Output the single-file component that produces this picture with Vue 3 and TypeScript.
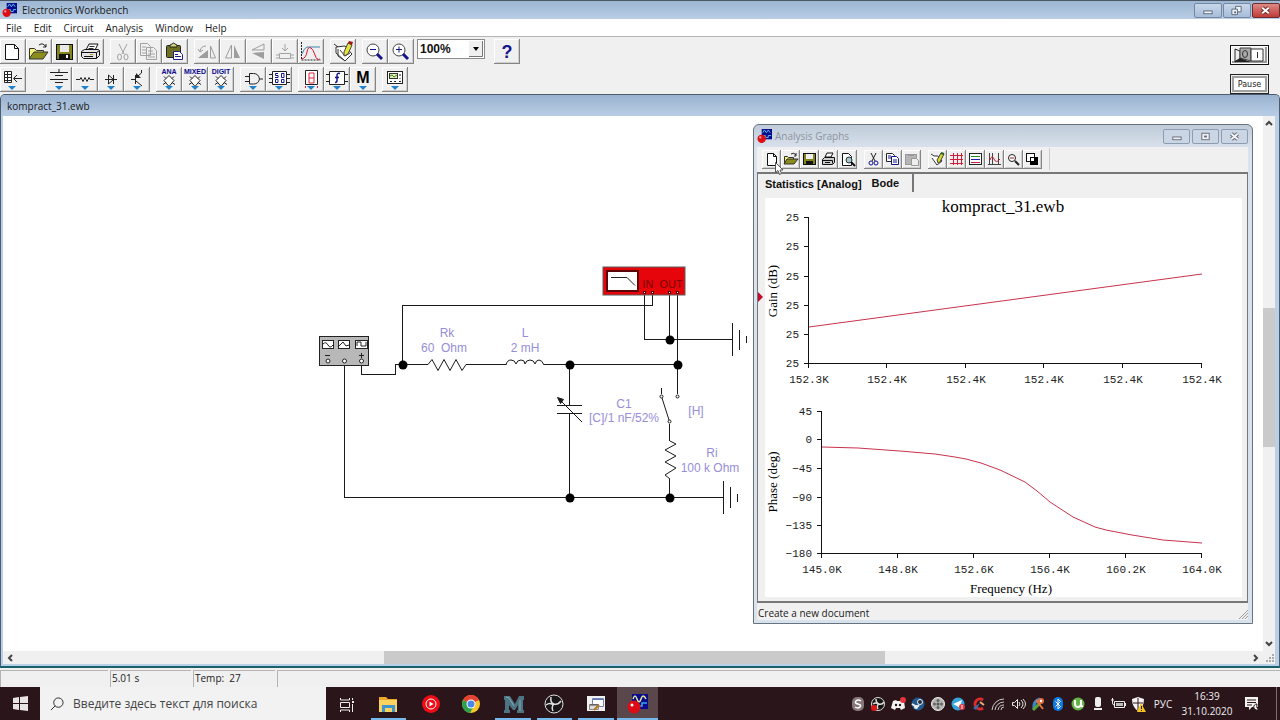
<script setup lang="ts">
import { ref } from 'vue'

interface Tool {
  name: string
  art: string
  off?: boolean
}

const logo =
  '<rect x="5" y="0" width="11" height="11" fill="#0a0a8c"/><path d="M6 4l2-3 2 3 2-3 2 3M6 9V7h3v2h3V7h3" stroke="#58c8ee" fill="none"/><circle cx="5" cy="10.5" r="4.5" fill="#dc0d14"/><circle cx="3.5" cy="9" r="1.2" fill="#ff9c9c"/>'

const drop = '<path d="M9 19h8l-4 4z" fill="#1f82cf"/>'
const chip = '<path d="M13 8.5l5 5-5 6-5-6z" fill="#fff" stroke="#222"/><path d="M8 9.5l2 2M18 9.5l-2 2M7 17.5l3-2M19 17.5l-3-2" stroke="#222"/>'
const tag = (t: string) =>
  `<text x="13" y="7" text-anchor="middle" font-family="Liberation Sans, sans-serif" font-size="7" font-weight="bold" fill="#0c0c8c">${t}</text>`
const ink = 'stroke="#222" fill="none"'
const dim = 'stroke="#a2a2a2" fill="none"'

const fileTools: Tool[] = [
  { name: 'New', art: '<path d="M5.5 5.5h9l4 4v11h-13z" fill="#fff" stroke="#111"/><path d="M14.5 5.5v4h4" stroke="#111" fill="none"/>' },
  { name: 'Open', art: '<path d="M3.5 19.5v-10h5l2 2h7v3" fill="#f4f27c" stroke="#333"/><path d="M3 20l5-7h14l-5 7z" fill="#8a8c1c" stroke="#333"/><path d="M13 6q4-3 7 2m0-3v3h-3" stroke="#222" fill="none"/>' },
  { name: 'Save', art: '<rect x="4.5" y="5.5" width="16" height="15" fill="#83851c" stroke="#111"/><rect x="8" y="6" width="9" height="7" fill="#e9e9e9"/><rect x="7" y="15" width="11" height="5" fill="#111"/><rect x="14" y="16" width="2" height="3" fill="#fff"/>' },
  { name: 'Print', art: '<path d="M8 11l3-6h9l-3 6z" fill="#fff" stroke="#111"/><path d="M11.5 7.5h5M10.5 9.5h5" stroke="#333"/><path d="M3.5 12.5l3-2h14l1 1v5l-3 3h-13l-2-2z" fill="#e4e4e4" stroke="#111"/><path d="M3.5 13.5h15v6M18.5 13.5l3-2" stroke="#111" fill="none"/><path d="M6 17.5h9" stroke="#111"/><path d="M12 15.5h3" stroke="#b0a010"/>' },
]
const editTools: Tool[] = [
  { name: 'Cut', off: true, art: `<path d="M9 5l5 10M17 5l-5 10" ${dim}/><ellipse cx="9.5" cy="18" rx="2" ry="3" ${dim}/><ellipse cx="16" cy="18" rx="2" ry="3" ${dim}/>` },
  { name: 'Copy', off: true, art: `<path d="M4.5 4.5h7l3 3v9h-10z" ${dim}/><path d="M10.5 8.5h7l3 3v9h-10zM6 8h4M6 11h4M6 14h4M12 12h5M12 15h7M12 18h7" ${dim}/>` },
  { name: 'Paste', art: '<rect x="4.5" y="6.5" width="14" height="12" rx="1" fill="#6f7020" stroke="#222"/><path d="M8 8V6l2-1q2-2 3 0l2 1v2z" fill="#d8d87c" stroke="#222"/><path d="M11.5 12.5h6l3 3v5h-9z" fill="#fff" stroke="#20208c"/><path d="M13 15.5h3M13 17.5h6" stroke="#20208c"/>' },
]
const shapeTools: Tool[] = [
  { name: 'Rotate', off: true, art: '<path d="M4 19h10v-8z" fill="#9d9d9d"/><path d="M16.5 7v12h5z" fill="none" stroke="#9d9d9d"/><path d="M6 12q1-5 6-5M4 10l2 3 3-2" stroke="#9d9d9d" fill="none"/>' },
  { name: 'Flip horizontal', off: true, art: '<path d="M11.5 6v13h-6z" fill="none" stroke="#9d9d9d"/><path d="M14 6v13h6z" fill="#9d9d9d"/>' },
  { name: 'Flip vertical', off: true, art: '<path d="M18 5v6H6z" fill="none" stroke="#9d9d9d"/><path d="M18 13v7L6 14z" fill="#9d9d9d"/>' },
  { name: 'Subcircuit', off: true, art: `<path d="M13 5v7m-3-3l3 3 3-3M7.5 14.5h11v5h-11zM4 16h3M19 16h3M4 19h3M19 19h3" ${dim}/>` },
  { name: 'Graphs', art: '<path d="M3.5 3v18h19" stroke="#222" stroke-dasharray="2 1" fill="none"/><path d="M4 15q2-6 5-7h13" stroke="#3a86a8" fill="none"/><path d="M4 20q4-1 5-7t4-4q2 1 4 7t5 4" stroke="#dc1428" fill="none"/>' },
]
const descTools: Tool[] = [
  { name: 'Description', art: '<path d="M4 5l4 3M6 8l9-1 7 8-7 7-9-8z" fill="#fff" stroke="#333"/><path d="M8 10v7l6 4M10 11l5 6 5-3" stroke="#333" fill="none"/><path d="M14 13l4-9 4 2-4 9-4 2z" fill="#e8e43c" stroke="#444"/><path d="M18 4l1-2 4 1-1 3z" fill="#a01414"/>' },
]
const zoomTools: Tool[] = [
  { name: 'Zoom out', art: '<circle cx="11" cy="11" r="6" fill="#fff" stroke="#444"/><path d="M8 10.5h6" stroke="#14148c"/><path d="M15 15l5 5" stroke="#14148c" stroke-width="3"/>' },
  { name: 'Zoom in', art: '<circle cx="11" cy="11" r="6" fill="#fff" stroke="#444"/><path d="M8 10.5h6M11 7.5v6" stroke="#14148c"/><path d="M15 15l5 5" stroke="#14148c" stroke-width="3"/>' },
]
const partGroups: Tool[][] = [
  [
    { name: 'Sources', art: drop + '<path d="M4 5.5h18M9 8.5h8M4 12.5h18M9 15.5h8M13 2v3" stroke="#222"/>' },
    { name: 'Basic', art: drop + `<path d="M4 12.5h4l1-2 2 4 2-4 2 4 2-4 1 2h4" ${ink}/>` },
    { name: 'Diodes', art: drop + `<path d="M7 12.5h12M10.5 8v9l5-4.5zM15.5 8v9" ${ink}/>` },
    { name: 'Transistors', art: drop + '<path d="M7 12.5h4M11.5 8v9M11.5 11l6-5v-3M12 14l6 5" stroke="#222" fill="none"/><path d="M12 6v5h5z" fill="#222"/>' },
  ],
  [
    { name: 'Analog ICs', art: tag('ANA') + chip + drop },
    { name: 'Mixed ICs', art: tag('MIXED') + chip + drop },
    { name: 'Digital ICs', art: tag('DIGIT') + chip + drop },
  ],
  [
    { name: 'Logic gates', art: drop + `<path d="M9.5 6.5h4q5 0 6 5.5-1 5-6 5h-4zM5 9.5h4M5 14.5h4M20 12h3" ${ink}/>` },
    { name: 'Digital', art: drop + '<path d="M6.5 4.5h14v13h-14zM3 7.5h3M3 11.5h3M3 15.5h3M21 7.5h3M21 11.5h3M21 15.5h3" stroke="#222" fill="#fff"/><path d="M12 6.5H9.5v2H12v2H9M15.5 6.5H18v4h-2.5zM9.5 12.5H12v3H9.5zM15.5 12.5H18v3h-2.5z" stroke="#14148c" fill="none"/>' },
  ],
  [
    { name: 'Indicators', art: '<path d="M7.5 3.5h12v14h-12z" stroke="#222" fill="#fff"/><path d="M11 6h5v5h-5zM11 11v5h5v-5M7.5 19v2M19.5 19v2" stroke="#e0233a" fill="none"/>' + drop },
    { name: 'Controls', art: drop + '<path d="M5.5 4.5h15v13h-15zM2 7.5h3M2 14.5h3M21 7.5h3M21 14.5h3" stroke="#222" fill="#fff"/><path d="M16 6.5q-3-1-3 2v5q0 2-2 2M11 10.5h4" stroke="#14148c" stroke-width="1.5" fill="none"/>' },
    { name: 'Miscellaneous', art: '<text x="13" y="16" text-anchor="middle" font-family="Liberation Sans, sans-serif" font-size="16" font-weight="bold">M</text>' + drop },
  ],
  [
    { name: 'Instruments', art: drop + '<rect x="5.5" y="4.5" width="15" height="12" fill="#fff" stroke="#222"/><rect x="7.5" y="6.5" width="8" height="5" fill="#dff0b8" stroke="#333"/><path d="M8 9l2-1 2 2 3-2" stroke="#4a8a22" fill="none"/><path d="M18 7v2M18 11v1M8 14.5h2M12 14.5h2M17 14.5h2" stroke="#222"/>' },
  ],
]

const graphTools: Tool[][] = [
  [
    { name: 'New document', art: '<path d="M5.5 3.5h6l3 3v9h-9z" fill="#fff" stroke="#111"/><path d="M11.5 3.5v3h3" stroke="#111" fill="none"/>' },
    { name: 'Open document', art: '<path d="M3.5 13.5v-7h3l1 1h5v2" fill="#f0ee6c" stroke="#333"/><path d="M3 14l3-5h11l-4 5z" fill="#8a8c1c" stroke="#333"/><path d="M10 4q3-2 5 1m0-2v3h-2" stroke="#222" fill="none"/>' },
    { name: 'Save document', art: '<rect x="3.5" y="3.5" width="12" height="11" fill="#83851c" stroke="#111"/><rect x="6" y="4" width="7" height="5" fill="#eee"/><rect x="6" y="11" width="7" height="3" fill="#111"/>' },
    { name: 'Print graph', art: '<path d="M6 7l2-4h6l-2 4z" fill="#fff" stroke="#111"/><path d="M3.5 9.5l2-2h10v5l-2 2h-10z" fill="#ccc" stroke="#111"/><path d="M3.5 10.5h10v3M6 12.5h5" stroke="#111" fill="none"/>' },
    { name: 'Print preview', art: '<path d="M4.5 3.5h6l3 3v9h-9z" fill="#fff" stroke="#111"/><circle cx="11" cy="10" r="3" fill="#9fc9cc" stroke="#333"/><path d="M13 12l4 4" stroke="#111" stroke-width="2"/>' },
  ],
  [
    { name: 'Cut graph', art: '<path d="M7 3l4 8M12 3l-4 8" stroke="#222"/><circle cx="7" cy="13" r="2" fill="none" stroke="#14148c"/><circle cx="12" cy="13" r="2" fill="none" stroke="#14148c"/>' },
    { name: 'Copy graph', art: '<path d="M3.5 3.5h6l2 2v6h-8z" fill="#fff" stroke="#222"/><path d="M8.5 6.5h5l2 2v6h-7z" fill="#fff" stroke="#14148c"/><path d="M5 6h3M5 8h3M10 10h4M10 12h4" stroke="#14148c"/>' },
    { name: 'Paste graph', off: true, art: '<rect x="3.5" y="4.5" width="11" height="10" fill="#b5b5b5" stroke="#999"/><path d="M6 4h6v2H6z" fill="#999"/><path d="M9.5 8.5h5l2 2v5h-7z" fill="#eee" stroke="#999"/>' },
  ],
  [
    { name: 'Properties', art: '<path d="M3 4l3 2h4l4 5-5 4-5-7" fill="#fff" stroke="#333"/><path d="M9 10l4-7 3 1-4 8-2 1z" fill="#d8d42c" stroke="#444"/><path d="M13 3l3 1" stroke="#286020" stroke-width="2"/>' },
    { name: 'Toggle grid', art: '<path d="M6.5 3v12M10.5 3v12M14.5 3v12M3 5.5h13M3 9.5h13M3 13.5h13" stroke="#cf1d3b"/>' },
    { name: 'Toggle legend', art: '<rect x="3.5" y="3.5" width="12" height="11" fill="#fff" stroke="#222"/><path d="M5 6.5h9" stroke="#2c8c2c"/><path d="M5 9.5h9" stroke="#2020b0"/><path d="M5 12.5h9" stroke="#c02040"/>' },
    { name: 'Toggle cursors', art: '<path d="M4.5 3v12M7.5 3v12M13.5 3v12M3 14.5h13" stroke="#444" fill="none"/><path d="M5 10q2-6 4-1t6 0" stroke="#cf1d3b" fill="none"/>' },
    { name: 'Restore', art: '<circle cx="8" cy="8" r="3.5" fill="#fff" stroke="#222"/><path d="M6 8h4" stroke="#a01c1c"/><path d="M11 11l4 4" stroke="#222" stroke-width="2"/>' },
    { name: 'Reverse colors', art: '<rect x="3.5" y="3.5" width="8" height="8" fill="#fff" stroke="#111"/><rect x="7" y="7" width="8" height="8" fill="#000"/><rect x="8" y="8" width="3" height="3" fill="#fff"/>' },
  ],
]

const running: { name: string; art: string; state: string }[] = [
  { name: 'Task view', state: '', art: '<path d="M4.5 5v2h9v-2M4.5 9.5h9v5h-9zM4.5 19v-2h9v2M16.5 5v2M16.5 11v8" stroke="#eee" fill="none"/><rect x="16" y="8" width="2" height="2" fill="#eee"/>' },
  { name: 'Explorer', state: 'open', art: '<path d="M2 4h7l2 2h9v4H2z" fill="#e8a92c"/><rect x="2" y="7" width="18" height="12" fill="#fbd35e"/><path d="M5 19v-7h13v7h-3v-4H8v4z" fill="#3d95cf"/>' },
  { name: 'YouTube Music', state: '', art: '<circle cx="12" cy="11" r="9" fill="#f00c14"/><circle cx="12" cy="11" r="5" fill="none" stroke="#fff"/><path d="M10.5 8.5v5l4-2.5z" fill="#fff"/>' },
  { name: 'Chrome', state: '', art: '<circle cx="11" cy="11" r="9" fill="#f8c52b"/><path d="M11 11L3 7a9 9 0 0 1 16 0z" fill="#e34335"/><path d="M11 11L3 7a9 9 0 0 0 7 13l4-7z" fill="#2da04e"/><circle cx="11" cy="11" r="4.5" fill="#fff"/><circle cx="11" cy="11" r="3.5" fill="#4b86ea"/>' },
  { name: 'Mathcad', state: 'open', art: '<path d="M2 3h6l5 8 4-8h5v4h-1v10h1v3h-7v-3h1v-5l-3 5h-2l-4-5v5h1v3H2v-3h1V7H2z" fill="#4d7482"/><path d="M4 4l3 1 5 8M18 7v11" stroke="#86aab5" fill="none"/>' },
  { name: 'OBS Studio', state: 'open', art: '<circle cx="11" cy="11" r="9" fill="#1b1718" stroke="#ddd"/><path d="M8 4q-1 6 3 7t7-3M11 11q-3 3-1 7M3 12q4-3 7 0" stroke="#ddd" stroke-width="1.5" fill="none"/>' },
  { name: 'Recorder', state: 'open', art: '<rect x="2" y="3" width="18" height="15" fill="#f1f1f1"/><path d="M7.5 5.5h11v8h-11z" fill="#fff" stroke="#7a86b0"/><path d="M8 6.5h10" stroke="#5875b8"/><path d="M4.5 11.5h9v5h-9z" fill="#ddd" stroke="#888"/><path d="M5 12h8" stroke="#444"/><path d="M9 17l5-5" stroke="#b27a20" stroke-width="2"/>' },
  { name: 'Electronics Workbench', state: 'active', art: '<rect x="6" y="1" width="16" height="15" fill="#0a0a8c"/><path d="M7 6q2-6 4 0t4 0q2-6 5 0" stroke="#e0e890" stroke-width="1.5" fill="none"/><path d="M7 13v-3h5v3h4v-3h5" stroke="#38a8ee" stroke-width="1.5" fill="none"/><circle cx="8" cy="14" r="6.5" fill="#dc0d14"/><circle cx="6" cy="12" r="1.5" fill="#fff"/>' },
]

const tray: { name: string; art: string }[] = [
  { name: 'Skype', art: '<rect x="2" y="1" width="12" height="14" rx="5" fill="#85777b"/><path d="M11 5Q8 3 6 5t2 3q4 1 2 3t-5 0" stroke="#fff" stroke-width="1.5" fill="none"/>' },
  { name: 'OBS', art: '<circle cx="8" cy="8" r="6.5" fill="#151515" stroke="#ddd"/><path d="M6 3q0 4 3 5t5-2M9 8q-3 2-1 5M3 8q3-2 5 0" stroke="#ddd" stroke-width="1.5" fill="none"/><circle cx="4" cy="12" r="3" fill="#e01414"/>' },
  { name: 'Discord', art: '<path d="M3 5l3-1 1 1h3l1-1 3 1 1 7-4 2-1-2H6l-1 2-4-2z" fill="#f2f2f2"/><circle cx="6" cy="9" r="1.2" fill="#2a151b"/><circle cx="10" cy="9" r="1.2" fill="#2a151b"/><circle cx="13" cy="4" r="3" fill="#e5333f"/>' },
  { name: 'Steam', art: '<circle cx="8" cy="8" r="6.5" fill="#225a8e"/><circle cx="10" cy="6" r="2.5" fill="#1b3044" stroke="#eee"/><path d="M2 8l5 3 2-2" stroke="#eee" stroke-width="2" fill="none"/><circle cx="6" cy="11" r="2" fill="#eee"/>' },
  { name: 'Camera', art: '<circle cx="8" cy="8" r="6.5" fill="#b4b4b4" stroke="#eee"/><circle cx="8" cy="8" r="1.5" fill="#555"/><g fill="#666"><circle cx="8" cy="4.5" r="1.5"/><circle cx="8" cy="11.5" r="1.5"/><circle cx="4.5" cy="8" r="1.5"/><circle cx="11.5" cy="8" r="1.5"/></g>' },
  { name: 'Telegram', art: '<circle cx="8" cy="8" r="6.5" fill="#35a6dc"/><path d="M3 8l9-4-2 8-3-2z" fill="#fff"/><circle cx="12" cy="11" r="3" fill="#e5333f"/><path d="M12 9v4" stroke="#fff"/>' },
  { name: 'CCleaner', art: '<path d="M13 4A5 5 0 1 0 13 12" stroke="#d92d2d" stroke-width="3" fill="none"/><path d="M10 7l-7 5 3 2z" fill="#2f6fb2"/><path d="M10 6l4 3" stroke="#e8b06c" stroke-width="2"/>' },
  { name: 'Network', art: '<path d="M2 14A12 12 0 0 1 14 3M5 14a9 9 0 0 1 9-8M8 14a6 6 0 0 1 6-5M11 14a3 3 0 0 1 3-3" stroke="#ccc" fill="none"/>' },
  { name: 'Volume', art: '<path d="M2.5 6.5h2l3-3v9l-3-3h-2z" fill="none" stroke="#eee"/><path d="M9 6q2 2 0 4M11 4q4 4 0 8M13 3q5 5 0 10" stroke="#ddd" fill="none"/>' },
  { name: 'Updater', art: '<path d="M4 13q-1-8 6-10" stroke="#3d86c9" stroke-width="3" fill="none"/><path d="M3 14l7-7" stroke="#55a53d" stroke-width="3"/><path d="M6 4l7 9" stroke="#e0793a" stroke-width="2"/><circle cx="11" cy="5" r="3" fill="#e86a3a"/><circle cx="11" cy="5" r="1.2" fill="#fff"/>' },
  { name: 'Bluetooth', art: '<rect x="3" y="1" width="10" height="14" rx="5" fill="#0c7be0"/><path d="M5.5 5.5l5 5-2.5 2.5v-10l2.5 2.5-5 5" stroke="#fff" fill="none"/>' },
  { name: 'uTorrent', art: '<circle cx="8" cy="8" r="6.5" fill="#64b545"/><path d="M5 4v4q0 3 3 3t3-3V4M11 8q0 3 2 2" stroke="#fff" stroke-width="2" fill="none"/>' },
  { name: 'Microphone', art: '<rect x="5" y="1" width="6" height="10" rx="2" fill="#eee"/><path d="M4 12h8v2H4z" fill="#eee"/>' },
  { name: 'Battery', art: '<path d="M4.5 5.5h10v6h-10z" stroke="#eee" fill="none"/><rect x="6" y="7" width="7" height="3" fill="#bbb"/><path d="M1 4h3M2.5 2v5q0 2 2 2M15.5 7v3" stroke="#eee" fill="none"/>' },
  { name: 'Security', art: '<path d="M8 1l6 2q0 8-6 12-6-4-6-12z" fill="#f4f4f4"/><path d="M8 2v12M3 7h10" stroke="#2a151b"/><path d="M11 7l5 9H7z" fill="#f6c21c"/><path d="M11.5 10v3M11.5 14v1" stroke="#222"/>' },
]

const menus = ['File', 'Edit', 'Circuit', 'Analysis', 'Window', 'Help']
const zoom = ref('100%')
const query = ref('')
const tab = ref('Bode')

const gainY = [217, 246, 276, 305, 334, 363]
const gainX = [
  { x: 809, t: '152.3K' }, { x: 887, t: '152.4K' }, { x: 966, t: '152.4K' },
  { x: 1044, t: '152.4K' }, { x: 1123, t: '152.4K' }, { x: 1202, t: '152.4K' },
]
const phaseY = [
  { y: 411, t: '45' }, { y: 439, t: '0' }, { y: 468, t: '−45' },
  { y: 497, t: '−90' }, { y: 525, t: '−135' }, { y: 553, t: '−180' },
]
const phaseX = [
  { x: 822, t: '145.0K' }, { x: 898, t: '148.8K' }, { x: 974, t: '152.6K' },
  { x: 1050, t: '156.4K' }, { x: 1126, t: '160.2K' }, { x: 1202, t: '164.0K' },
]
const phaseCurve =
  '822,447 858,448 886,450 900,451 935,454 955,457 966,459 981,463 1000,470 1025,482 1037,491 1050,502 1073,517 1095,527 1106,530 1132,535 1163,540 1202,543'

const labels = [
  { x: 447, y: 337, t: 'Rk' }, { x: 444, y: 352, t: '60\u00a0 Ohm' },
  { x: 525, y: 337, t: 'L' }, { x: 525, y: 352, t: '2 mH' },
  { x: 624, y: 408, t: 'C1' }, { x: 624, y: 422, t: '[C]/1 nF/52%' },
  { x: 696, y: 415, t: '[H]' }, { x: 712, y: 457, t: 'Ri' }, { x: 710, y: 472, t: '100 k Ohm' },
]
const nodes = [[403, 365], [570, 365], [678, 365], [670, 340], [570, 498], [670, 498]]
</script>

<template>
  <div class="screen">
    <header class="titlebar">
      <svg class="logo" viewBox="0 0 16 16" v-html="logo"></svg>
      <h1>Electronics Workbench</h1>
      <div class="winbtns">
        <button aria-label="Minimize"><svg viewBox="0 0 27 14"><rect x="9.5" y="7.5" width="9" height="3" fill="#eef3f8" stroke="#596577" /></svg></button>
        <button aria-label="Restore"><svg viewBox="0 0 27 14"><path d="M12.5 2.5h6v6h-6z" fill="#eef3f8" stroke="#596577" /><path d="M8.5 5.5h6v6h-6z" fill="#eef3f8" stroke="#596577" /><rect x="11" y="8" width="2" height="2" fill="#596577" /></svg></button>
        <button class="close" aria-label="Close"><svg viewBox="0 0 27 14"><path d="M10 4l7 6M17 4l-7 6" stroke="#6a2b2b" stroke-width="4" /><path d="M10 4l7 6M17 4l-7 6" stroke="#fff" stroke-width="2" /></svg></button>
      </div>
    </header>

    <nav class="menubar">
      <button v-for="m in menus" :key="m">{{ m }}</button>
    </nav>

    <section class="tools">
      <div class="rows">
        <div class="row">
          <div v-for="(g, i) in [fileTools, editTools, shapeTools, descTools, zoomTools]" :key="i" class="group">
            <button v-for="t in g" :key="t.name" class="tool" :aria-label="t.name" :disabled="t.off">
              <svg viewBox="0 0 26 25" v-html="t.art"></svg>
            </button>
          </div>
          <div class="zoombox">
            <select v-model="zoom" aria-label="Zoom">
              <option>100%</option>
              <option>80%</option>
              <option>50%</option>
            </select>
            <svg viewBox="0 0 14 16"><path d="M0 0h14v16H0z" fill="#f0f0f0" /><path d="M0 15.5h13.5V0" stroke="#777" fill="none" /><path d="M4 6h6l-3 4z" /></svg>
          </div>
          <button class="tool help" aria-label="Help topics">?</button>
        </div>
        <div class="row">
          <button class="tool favorites" aria-label="Favorites">
            <svg viewBox="0 0 26 25"><path d="M4.5 4.5h7v11h-7zM4 7.5h7M4 10.5h7M4 13.5h7M7.5 4v11" stroke="#222" fill="#fff" /><path d="M14 11.5h8M17 8l-3.5 3.5 3.5 3.5" stroke="#222" fill="none" /><path d="M8 19h8l-4 4z" fill="#1f82cf" /></svg>
          </button>
          <div v-for="(g, i) in partGroups" :key="i" class="group">
            <button v-for="t in g" :key="t.name" class="tool" :aria-label="t.name">
              <svg viewBox="0 0 26 25" v-html="t.art"></svg>
            </button>
          </div>
        </div>
      </div>
      <div class="power">
        <button aria-label="Activate simulation">
          <svg viewBox="0 0 36 18"><path d="M3 3h15v12H3z" fill="#fff" /><path d="M4 3l5 2v8l-5 3z" fill="#eee" stroke="#222" /><path d="M9 2h11v13l-11-3z" fill="#a9a9a9" stroke="#444" /><path d="M4 15l5-3 11 4H4z" fill="#222" /><ellipse cx="14" cy="8" rx="2.5" ry="3.5" fill="none" stroke="#333" /><path d="M20 3h12v12H20z" fill="#fff" stroke="#333" /><path d="M26.5 6v6" stroke="#333" /></svg>
        </button>
        <button class="pause">Pause</button>
      </div>
    </section>

    <main class="child">
      <h2>kompract_31.ewb</h2>
      <div class="body">
        <div class="canvas">
          <svg class="circuit" viewBox="3 116 760 535" width="760" height="535">
            <g fill="none" stroke="#1a1a1a" shape-rendering="crispEdges">
              <path d="M344.5 363V497.5H723M361.5 363V374.5H395.5V364.5H428M402.5 364V305.5H652.5V293M466 364.5H506M544 364.5H678M569.5 365V405M569.5 414V498M557 405.5h25M557 413.5h25M644.5 293V339.5H733M669.5 293V339M677.5 293V394M661.5 388v6M669.5 424V441M669.5 479V498" />
              <path d="M732.5 323v33M739.5 330v20M746.5 336v7M723.5 481v33M730.5 487v21M737.5 494v8" />
            </g>
            <g fill="none" stroke="#1a1a1a">
              <path d="M428 364.5l4-5 6 11 6-11 6 11 6-11 6 11 4-6M506 365q1-5 5-5t5 4q1-4 5-4t4 4q1-4 5-4t5 4q1-4 4-4t5 5" />
              <path d="M670 441l6 3-11 6 11 6-11 6 11 6-11 7 5 4M662 398l7 22M582 422l-22-22" />
              <g fill="#fff"><circle cx="661.5" cy="396.5" r="1.5" /><circle cx="677.5" cy="396.5" r="1.5" /><circle cx="669.5" cy="421.5" r="1.5" /></g>
              <path d="M557.5 397.5l6 2-3 4z" fill="#1a1a1a" />
            </g>
            <circle v-for="(n, i) in nodes" :key="i" :cx="n[0]" :cy="n[1]" r="4.5" />

            <rect x="319.5" y="336.5" width="49" height="29" fill="#b8b8b8" stroke="#222" />
            <g fill="#fff" stroke="#222">
              <rect x="322.5" y="340.5" width="11" height="8" /><rect x="338.5" y="340.5" width="11" height="8" /><rect x="355.5" y="340.5" width="12" height="8" />
              <circle cx="328" cy="361" r="2" /><circle cx="344.5" cy="361" r="2" /><circle cx="361.5" cy="361" r="2" />
            </g>
            <path d="M323 344q3-3 5 1t5 0M339 346l4-4 3 4 3-1M357 346v-4h4v4h5v-4M325 355.5h5M359 355.5h5M361.5 353v5" stroke="#222" fill="none" />

            <rect x="603" y="267" width="82" height="28" fill="#e5050a" stroke="#5e5e5e" />
            <rect x="607" y="271" width="31" height="20" fill="#fff" stroke="#5c0508" stroke-width="2" />
            <path d="M611 277.5h16l8 8" stroke="#222" fill="none" />
            <g class="port"><text x="648" y="288">IN</text><text x="671" y="288">OUT</text></g>
            <g fill="#fff" stroke="#5c0508"><rect x="643.5" y="291.5" width="2" height="2" /><rect x="651.5" y="291.5" width="2" height="2" /><rect x="668.5" y="291.5" width="2" height="2" /><rect x="676.5" y="291.5" width="2" height="2" /></g>
            <text v-for="l in labels" :key="l.t" class="part" :x="l.x" :y="l.y">{{ l.t }}</text>
          </svg>

          <section class="graphs">
            <header>
              <svg class="logo" viewBox="0 0 16 16" v-html="logo"></svg>
              <h3>Analysis Graphs</h3>
              <div class="winbtns pale">
                <button aria-label="Minimize graphs"><svg viewBox="0 0 27 14"><rect x="9.5" y="7.5" width="9" height="3" fill="#eef3f8" stroke="#667" /></svg></button>
                <button aria-label="Maximize graphs"><svg viewBox="0 0 27 14"><rect x="9.5" y="3.5" width="8" height="7" fill="#eef3f8" stroke="#667" /><rect x="12" y="6" width="3" height="2" fill="#667" /></svg></button>
                <button aria-label="Close graphs"><svg viewBox="0 0 27 14"><path d="M10 4l7 6M17 4l-7 6" stroke="#667" stroke-width="4" /><path d="M10 4l7 6M17 4l-7 6" stroke="#f4f6fa" stroke-width="2" /></svg></button>
              </div>
            </header>
            <div class="gtools">
              <div v-for="(g, i) in graphTools" :key="i" class="group">
                <button v-for="t in g" :key="t.name" class="tool small" :aria-label="t.name" :disabled="t.off">
                  <svg viewBox="0 0 19 19" v-html="t.art"></svg>
                </button>
              </div>
              <i></i>
            </div>
            <div class="panel">
              <div class="tabs">
                <button @click="tab = 'Statistics'">Statistics [Analog]</button>
                <button class="current" @click="tab = 'Bode'">Bode</button>
              </div>
              <svg class="chart" viewBox="758 198 489 403">
                <rect x="765" y="198" width="477" height="399" fill="#fff" />
                <path d="M758 292l5 5-5 5z" fill="#c00c2c" />
                <text class="heading" x="1003" y="212">kompract_31.ewb</text>
                <g stroke="#111" fill="none" shape-rendering="crispEdges">
                  <path d="M808.5 217V368M804 363.5H1202M821.5 411V558M817 553.5H1202" />
                  <path v-for="y in gainY" :key="y" :d="`M804 ${y + 0.5}h5`" />
                  <path v-for="p in gainX" :key="p.x" :d="`M${p.x - 0.5} 363v5`" />
                  <path v-for="p in phaseY" :key="p.y" :d="`M817 ${p.y + 0.5}h5`" />
                  <path v-for="p in phaseX" :key="p.x" :d="`M${p.x - 0.5} 553v5`" />
                </g>
                <g class="ticks end">
                  <text v-for="y in gainY" :key="y" x="799" :y="y + 4">25</text>
                  <text v-for="p in phaseY" :key="p.t" x="812" :y="p.y + 4">{{ p.t }}</text>
                </g>
                <g class="ticks">
                  <text v-for="p in gainX" :key="p.x" :x="p.x" y="383">{{ p.t }}</text>
                  <text v-for="p in phaseX" :key="p.x" :x="p.x" y="573">{{ p.t }}</text>
                </g>
                <g class="axis">
                  <text transform="translate(777 291) rotate(-90)">Gain (dB)</text>
                  <text transform="translate(777 482) rotate(-90)">Phase (deg)</text>
                  <text x="1011" y="593">Frequency (Hz)</text>
                </g>
                <g stroke="#c8324c" fill="none">
                  <path d="M809 327L1202 274" />
                  <polyline :points="phaseCurve" />
                </g>
              </svg>
            </div>
            <footer>
              <span>Create a new document</span>
              <svg viewBox="0 0 10 10"><path d="M1 10l9-9M4 10l6-6M7 10l3-3" stroke="#999" /></svg>
            </footer>
            <svg class="pointer" viewBox="0 0 9 14"><path d="M.5.5v10l2.5-2 1.5 4 2-1-1.5-3.5h3z" fill="#fff" stroke="#555" /></svg>
          </section>
        </div>
        <div class="vbar">
          <svg viewBox="0 0 12 14"><path d="M3 9l3-3 3 3" /></svg><span></span><b></b><span></span>
          <svg viewBox="0 0 12 14"><path d="M3 5l3 3 3-3" /></svg>
        </div>
        <div class="hbar">
          <svg viewBox="0 0 14 13"><path d="M9 4L6 7l3 3" /></svg><span></span><b></b><span></span>
          <svg viewBox="0 0 14 13"><path d="M5 4l3 3-3 3" /></svg>
        </div>
        <svg class="grip" viewBox="0 0 12 13"><path d="M9 4h2M6 7h2M9 7h2M3 10h2M6 10h2M9 10h2" stroke="#aaa" stroke-width="2" /></svg>
      </div>
    </main>

    <footer class="status">
      <span></span><span>5.01 s</span><span>Temp:&nbsp; 27</span><span></span>
    </footer>

    <footer class="taskbar">
      <button class="start" aria-label="Start">
        <svg viewBox="0 0 15 15"><path d="M0 2l6-1v6H0zM7 1l8-1v7H7zM0 8h6v6l-6-1zM7 8h8v7l-8-1z" fill="#e8e4e5" /></svg>
      </button>
      <label class="search">
        <svg viewBox="0 0 15 15"><circle cx="9" cy="6" r="5" /><path d="M5.5 9.5L1 14" /></svg>
        <input v-model="query" aria-label="Поиск" placeholder="Введите здесь текст для поиска" />
      </label>
      <nav class="apps">
        <button v-for="a in running" :key="a.name" :class="a.state" :aria-label="a.name">
          <svg viewBox="0 0 22 22" v-html="a.art"></svg>
        </button>
      </nav>
      <div class="tray">
        <button v-for="t in tray" :key="t.name" :aria-label="t.name">
          <svg viewBox="0 0 16 16" v-html="t.art"></svg>
        </button>
        <span class="lang">РУС</span>
        <time><span>16:39</span><span>31.10.2020</span></time>
        <button class="notes" aria-label="Notifications">
          <svg viewBox="0 0 16 16"><path d="M1 1h13v10H8l-3 3v-3H1z" fill="#f4f4f4" /><path d="M3 4h9M3 6.5h9M3 9h5" stroke="#2a151b" /><path d="M13 8a3 3 0 1 0 2 5q-3 0-2-5z" fill="#f4f4f4" stroke="#2a151b" /></svg>
        </button>
      </div>
    </footer>
  </div>
</template>

<style>
body {
  margin: 0;
  background: #f0f0f0;
}
</style>

<style scoped>
.screen {
  display: flex;
  flex-direction: column;
  height: 100vh;
  overflow: hidden;
  background: #f0f0f0;
  color: #1a1a1a;
  font: 10px/16px "Open Sans", "Noto Sans", sans-serif;
}
* {
  box-sizing: border-box;
}
button {
  margin: 0;
  padding: 0;
  border: 0;
  background: none;
  color: inherit;
  font: inherit;
}
svg {
  display: block;
  flex: none;
}
h1, h2, h3 {
  margin: 0;
  font: inherit;
}
.titlebar {
  display: flex;
  align-items: center;
  height: 19px;
  padding-left: 2px;
  border-top: 1px solid #4c5866;
  background: linear-gradient(#9db6d2, #b9cde4);
}
.logo {
  width: 15px;
  height: 15px;
  margin-right: 5px;
}
.winbtns {
  display: flex;
  gap: 1px;
  margin-left: auto;
}
.winbtns button {
  width: 28px;
  height: 15px;
  border: 1px solid #7488a4;
  border-radius: 2px;
  background: linear-gradient(#c8d8ea, #a6bcd8);
}
.winbtns svg {
  width: 25px;
  height: 13px;
}
.winbtns .close {
  border-color: #6e2c30;
  background: linear-gradient(#dc8a84, #c03c38);
}
.pale {
  gap: 2px;
}
.pale button {
  width: 27px;
  border-color: #8e9cb2;
  background: #cbd6e4;
}
.menubar {
  display: flex;
  height: 17px;
  padding-left: 6px;
  gap: 12px;
  background: #fff;
}
.tools {
  display: flex;
  justify-content: space-between;
  height: 58px;
  padding: 2px 11px 0 0;
  border-top: 1px solid #b4b4b4;
}
.rows {
  display: flex;
  flex-direction: column;
  gap: 3px;
}
.row {
  display: flex;
  gap: 6px;
}
.group {
  display: flex;
}
.tool {
  width: 26px;
  height: 25px;
  box-shadow: inset -1px -1px #858585, inset 1px 1px #fff, inset -2px -2px #cfcfcf;
}
.tool svg {
  width: 26px;
  height: 25px;
}
.help {
  margin-left: 3px;
  color: #14148c;
  font: bold 18px/24px "Liberation Sans", sans-serif;
}
.favorites {
  margin-right: 14px;
}
.zoombox {
  position: relative;
  height: 20px;
  margin-left: -3px;
}
.zoombox select {
  display: block;
  width: 68px;
  height: 20px;
  padding: 0 0 0 2px;
  border: 1px solid #8c8c8c;
  border-radius: 0;
  background: #fff;
  color: #111;
  appearance: none;
  font: bold 12px/18px "Liberation Sans", sans-serif;
}
.zoombox svg {
  position: absolute;
  top: 2px;
  right: 2px;
  width: 14px;
  height: 16px;
  pointer-events: none;
}
.power {
  display: flex;
  flex-direction: column;
  gap: 9px;
  padding-top: 6px;
}
.power button {
  width: 39px;
  height: 20px;
  border: 1px solid #111;
  box-shadow: inset 0 0 0 1px #fff, inset -3px -3px #999;
}
.power svg {
  width: 36px;
  height: 18px;
}
.power .pause {
  border: 1px solid #222;
  background: #fff;
  box-shadow: inset 0 0 0 1px #eee, inset 0 0 0 3px #a0a0a0;
  font: 8px/15px "DejaVu Sans", sans-serif;
}
.child {
  display: flex;
  flex: 1;
  flex-direction: column;
  min-height: 0;
  padding: 0 4px 2px 2px;
  border: 1px solid #4d5c6c;
  border-bottom: 2px solid #17606c;
  border-radius: 5px 5px 0 0;
  background: #b9d1e8;
}
.child h2 {
  height: 21px;
  margin: 0 -4px 0 -2px;
  padding: 3px 6px;
  border-radius: 4px 4px 0 0;
  background: linear-gradient(#9ab3d0, #b9cde5);
}
.body {
  display: grid;
  flex: 1;
  grid-template: minmax(0, 1fr) 13px / minmax(0, 1fr) 12px;
  min-height: 0;
  background: #f0f0f0;
}
.canvas {
  position: relative;
  overflow: hidden;
  background: #fff;
}
.part {
  fill: #968ed8;
  font: 12px "Liberation Sans", sans-serif;
  text-anchor: middle;
}
.port {
  fill: #7a0408;
  font: 11px "Liberation Sans", sans-serif;
  text-anchor: middle;
}
.graphs {
  position: absolute;
  top: 8px;
  right: 10px;
  display: flex;
  flex-direction: column;
  width: 500px;
  padding: 0 4px 3px 3px;
  border: 1px solid #68737f;
  border-radius: 6px 6px 0 0;
  background: linear-gradient(#c0cbda, #dae3ed 24px, #d8e2ec);
}
.graphs header {
  display: flex;
  align-items: center;
  height: 22px;
  color: #8b949f;
}
.graphs .logo {
  margin-right: 3px;
}
.gtools {
  display: flex;
  gap: 7px;
  height: 25px;
  padding: 3px 0 0 5px;
  background: #f0f0f0;
}
.gtools i {
  height: 22px;
  margin-top: -2px;
  border-left: 1px solid #ccc;
}
.small,
.small svg {
  width: 19px;
  height: 19px;
}
.panel {
  border: 1px solid #777;
  border-width: 2px 1px;
  background: #f0f0f0;
}
.tabs {
  display: flex;
  align-items: flex-start;
  height: 24px;
  color: #111;
  font: bold 11px/16px "Liberation Sans", sans-serif;
}
.tabs button {
  height: 20px;
  padding: 0 7px;
}
.tabs .current {
  height: 18px;
  padding: 0 13px 0 3px;
  border-right: 2px solid #777;
}
.chart {
  width: 100%;
}
.heading {
  font: 17px "Liberation Serif", serif;
  text-anchor: middle;
}
.axis {
  font: 13px "Liberation Serif", serif;
  text-anchor: middle;
}
.ticks {
  fill: #222;
  font: 11px "Liberation Mono", monospace;
  text-anchor: middle;
}
.ticks.end {
  text-anchor: end;
}
.graphs footer {
  display: flex;
  justify-content: space-between;
  height: 17px;
  padding: 2px 0 0 1px;
  background: #f0f0f0;
}
.graphs footer svg {
  width: 10px;
  height: 10px;
  margin-top: 4px;
}
.pointer {
  position: absolute;
  top: 37px;
  left: 21px;
  width: 9px;
  height: 14px;
}
.vbar {
  display: grid;
  grid-template-rows: 14px 178fr 139fr 190fr 14px;
}
.hbar {
  display: grid;
  grid-template-columns: 14px 367fr 501fr 364fr 14px;
}
.vbar path,
.hbar path {
  fill: none;
  stroke: #444;
  stroke-width: 2;
}
.vbar b,
.hbar b {
  background: #cacaca;
}
.status {
  display: grid;
  grid-template-columns: 108px 81px 82px 1fr;
  gap: 2px;
  height: 19px;
  padding-top: 2px;
}
.status span {
  padding-left: 1px;
  border: 1px solid #b4b4b4;
  border-width: 1px 0 0 1px;
  line-height: 15px;
}
.taskbar {
  display: flex;
  height: 33px;
  background: #2a151b;
  color: #eee;
}
.start {
  display: grid;
  place-items: center;
  width: 40px;
}
.start svg {
  width: 15px;
  height: 15px;
}
.search {
  display: flex;
  align-items: center;
  gap: 9px;
  width: 286px;
  padding-left: 10px;
  background: #f2f2f2;
}
.search svg {
  width: 14px;
  height: 14px;
  fill: none;
  stroke: #222;
}
.search input {
  flex: 1;
  min-width: 0;
  padding: 0;
  border: 0;
  outline: 0;
  background: none;
  font: 12px/18px "Open Sans", "Noto Sans", sans-serif;
}
.search input::placeholder {
  color: #444;
  opacity: 1;
}
.apps {
  display: grid;
  grid-template-columns: repeat(8, 1fr);
  width: 332px;
}
.apps button {
  display: grid;
  place-items: center;
  margin: 0 3px;
}
.apps svg {
  width: 22px;
  height: 22px;
}
.apps .open {
  box-shadow: inset 0 -2px #76b9ed;
}
.apps .active {
  margin: 0;
  background: #59474c;
  box-shadow: inset 0 -2px #76b9ed;
}
.tray {
  display: flex;
  align-items: center;
  margin-left: auto;
  margin-right: 3px;
  padding-right: 8px;
  border-right: 1px solid #7d7074;
}
.tray button {
  width: 20px;
}
.tray svg {
  width: 16px;
  height: 16px;
  margin: auto;
}
.lang {
  width: 30px;
  text-align: center;
}
time {
  display: grid;
  width: 58px;
  line-height: 15px;
  text-align: center;
}
.tray .notes {
  width: 32px;
}
</style>
